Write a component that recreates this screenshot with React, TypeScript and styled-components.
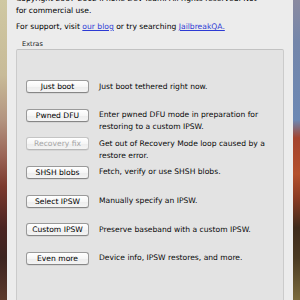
import React from "react";
import styled, { createGlobalStyle } from "styled-components";

const Global = createGlobalStyle`
  html, body { margin: 0; padding: 0; overflow: hidden; }
  body { width: 300px; height: 300px; font-family: "DejaVu Sans", Verdana, sans-serif; }
`;

const Desktop = styled.div`
  display: flex;
  width: 300px;
  height: 300px;
  overflow: hidden;
`;

const Strip = styled.div<{ $side: "left" | "right" }>`
  flex: 0 0 7px;
  background: ${(p) =>
    p.$side === "left"
      ? "linear-gradient(180deg, #cfc8a2 0%, #c8bb98 25%, #b39480 40%, #9a6456 52%, #7c3a2e 62%, #4a2422 76%, #3c2420 86%, #5c3a2c 100%)"
      : "linear-gradient(180deg, #8a8aa0 0%, #7486aa 14%, #6c88b4 40%, #a4442e 46%, #b4502c 58%, #8a3a22 66%, #3e2a1a 76%, #4a3a22 86%, #7a6a3c 100%)"};
`;

const Window = styled.div`
  flex: 1;
  background: #ececec;
  padding: 0 9px;
  display: flex;
  flex-direction: column;
  color: #000;
  font-size: 7.6px;
`;

const Para = styled.p<{ $top: number }>`
  margin: ${(p) => p.$top}px 0 0 0;
  line-height: 12px;
  white-space: nowrap;
`;

const Link = styled.a`
  color: #2c3ad4;
  text-decoration: underline;
`;

const GroupLabel = styled.div`
  margin: 7px 0 0 6px;
  font-size: 6.6px;
  line-height: 9px;
  color: #1a1a1a;
`;

const Group = styled.div`
  flex: 1;
  background: #e3e3e3;
  border: 1px solid #cbcbcb;
  border-top-color: #c2c2c2;
  border-bottom: none;
  border-radius: 2px 2px 0 0;
  padding: 30px 10px 0 9px;
  display: grid;
  grid-template-columns: 63px 1fr;
  grid-auto-rows: 28.67px;
  column-gap: 10px;
  align-content: start;
`;

const Button = styled.div<{ $disabled?: boolean }>`
  height: 11px;
  border: 1px solid ${(p) => (p.$disabled ? "#c4c4c4" : "#9a9a9a")};
  border-bottom-color: ${(p) => (p.$disabled ? "#b8b8b8" : "#868686")};
  border-radius: 3px;
  background: linear-gradient(180deg, #ffffff 0%, #f6f6f6 50%, #ececec 51%, #f4f4f4 100%);
  box-shadow: 0 0.5px 0.5px rgba(0, 0, 0, 0.12);
  display: flex;
  align-items: center;
  justify-content: center;
  color: ${(p) => (p.$disabled ? "#a6a6a6" : "#000")};
  line-height: 11px;
  white-space: nowrap;
`;

const Desc = styled.div`
  line-height: 12px;
  padding-top: 0.5px;
  color: #0a0a0a;
`;

const rows: { label: string; desc: React.ReactNode; disabled?: boolean }[] = [
  { label: "Just boot", desc: "Just boot tethered right now." },
  {
    label: "Pwned DFU",
    desc: (
      <>
        Enter pwned DFU mode in preparation for
        <br />
        restoring to a custom IPSW.
      </>
    ),
  },
  {
    label: "Recovery fix",
    disabled: true,
    desc: (
      <>
        Get out of Recovery Mode loop caused by a
        <br />
        restore error.
      </>
    ),
  },
  { label: "SHSH blobs", desc: "Fetch, verify or use SHSH blobs." },
  { label: "Select IPSW", desc: "Manually specify an IPSW." },
  { label: "Custom IPSW", desc: "Preserve baseband with a custom IPSW." },
  { label: "Even more", desc: "Device info, IPSW restores, and more." },
];

export default function App() {
  return (
    <>
      <Global />
      <Desktop>
        <Strip $side="left" />
        <Window>
          <Para $top={-7}>
            Copyright 2007-2012 iPhone Dev-Team. All rights reserved. Not
            <br />
            for commercial use.
          </Para>
          <Para $top={4}>
            For support, visit <Link>our blog</Link> or try searching{" "}
            <Link>JailbreakQA.</Link>
          </Para>
          <GroupLabel>Extras</GroupLabel>
          <Group>
            {rows.map((r) => (
              <React.Fragment key={r.label}>
                <Button $disabled={r.disabled}>{r.label}</Button>
                <Desc>{r.desc}</Desc>
              </React.Fragment>
            ))}
          </Group>
        </Window>
        <Strip $side="right" />
      </Desktop>
    </>
  );
}
